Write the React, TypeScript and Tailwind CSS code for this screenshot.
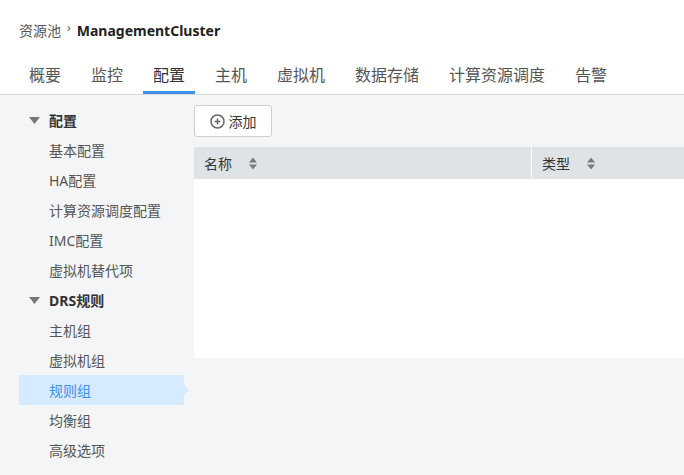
import React from 'react';

const tabs = ['概要', '监控', '配置', '主机', '虚拟机', '数据存储', '计算资源调度', '告警'];

const groups = [
  { title: '配置', items: ['基本配置', 'HA配置', '计算资源调度配置', 'IMC配置', '虚拟机替代项'] },
  { title: 'DRS规则', items: ['主机组', '虚拟机组', '规则组', '均衡组', '高级选项'] },
];

const font = { fontFamily: '"Noto Sans", "Noto Sans CJK SC", sans-serif' };

function SortIcon() {
  return (
    <svg width="8" height="13" viewBox="0 0 8 13" className="ml-[17px]">
      <path d="M4 0.5 L8 5.5 H0 Z" fill="#7a7a7a" />
      <path d="M4 12.5 L8 7.5 H0 Z" fill="#7a7a7a" />
    </svg>
  );
}

function Caret() {
  return (
    <svg width="11" height="7" viewBox="0 0 11 7" className="mr-[9px]">
      <path d="M0 0 H11 L5.5 7 Z" fill="#777" />
    </svg>
  );
}

export default function App() {
  return (
    <div className="w-[684px] h-[475px] overflow-hidden bg-[#f4f5f7] flex flex-col" style={font}>
      <div className="bg-white border-b border-[#d9d9d9] h-[95px] flex flex-col">
        <div className="flex items-center h-[22px] mt-[19px] pl-[19px] text-[14px] text-[#555]">
          <span>资源池</span>
          <span className="mx-[6px] text-[12px] text-[#555] -mt-[4px]">›</span>
          <span className="text-[14px] font-bold text-[#222]">ManagementCluster</span>
        </div>
        <div className="flex gap-[10px] pl-[19px] mt-auto">
          {tabs.map(t => (
            <div
              key={t}
              className={`px-[10px] h-[34px] flex items-start pt-[3px] text-[16px] border-b-[3px] ${
                t === '配置' ? 'border-[#3d8fe8] text-[#333]' : 'border-transparent text-[#555]'
              }`}
            >
              {t}
            </div>
          ))}
        </div>
      </div>

      <div className="flex flex-1">
        <div className="w-[194px] pt-[10px] pl-[19px] shrink-0">
          {groups.map(g => (
            <div key={g.title}>
              <div className="h-[30px] flex items-center pl-[10px] text-[14px] font-bold text-[#333]">
                <Caret />
                {g.title}
              </div>
              {g.items.map(it => {
                const active = it === '规则组';
                return (
                  <div
                    key={it}
                    className={`relative h-[30px] w-[165px] flex items-center pl-[30px] text-[14px] ${
                      active ? 'bg-[#d6ebff] text-[#3d8fe8]' : 'text-[#555]'
                    }`}
                  >
                    {it}
                    {active && (
                      <span className="absolute right-[-5px] top-[10px] w-0 h-0 border-y-[5px] border-y-transparent border-l-[5px] border-l-[#d6ebff]" />
                    )}
                  </div>
                );
              })}
            </div>
          ))}
        </div>

        <div className="flex-1 pt-[10px]">
          <button className="h-[32px] w-[78px] bg-white border border-[#cfcfcf] rounded-[3px] flex items-center justify-center gap-[4px] text-[14px] text-[#333]">
            <svg width="15" height="15" viewBox="0 0 15 15">
              <circle cx="7.5" cy="7.5" r="6.5" fill="none" stroke="#666" strokeWidth="1.5" />
              <path d="M7.5 4.5 V10.5 M4.5 7.5 H10.5" stroke="#666" strokeWidth="1.5" />
            </svg>
            添加
          </button>
          <div className="mt-[10px]">
            <div className="flex h-[32px] bg-[#e0e3e5] text-[14px] text-[#333]">
              <div className="w-[338px] border-r border-white flex items-center pl-[10px]">
                名称
                <SortIcon />
              </div>
              <div className="flex-1 flex items-center pl-[10px]">
                类型
                <SortIcon />
              </div>
            </div>
            <div className="h-[179px] bg-white" />
          </div>
        </div>
      </div>
    </div>
  );
}
